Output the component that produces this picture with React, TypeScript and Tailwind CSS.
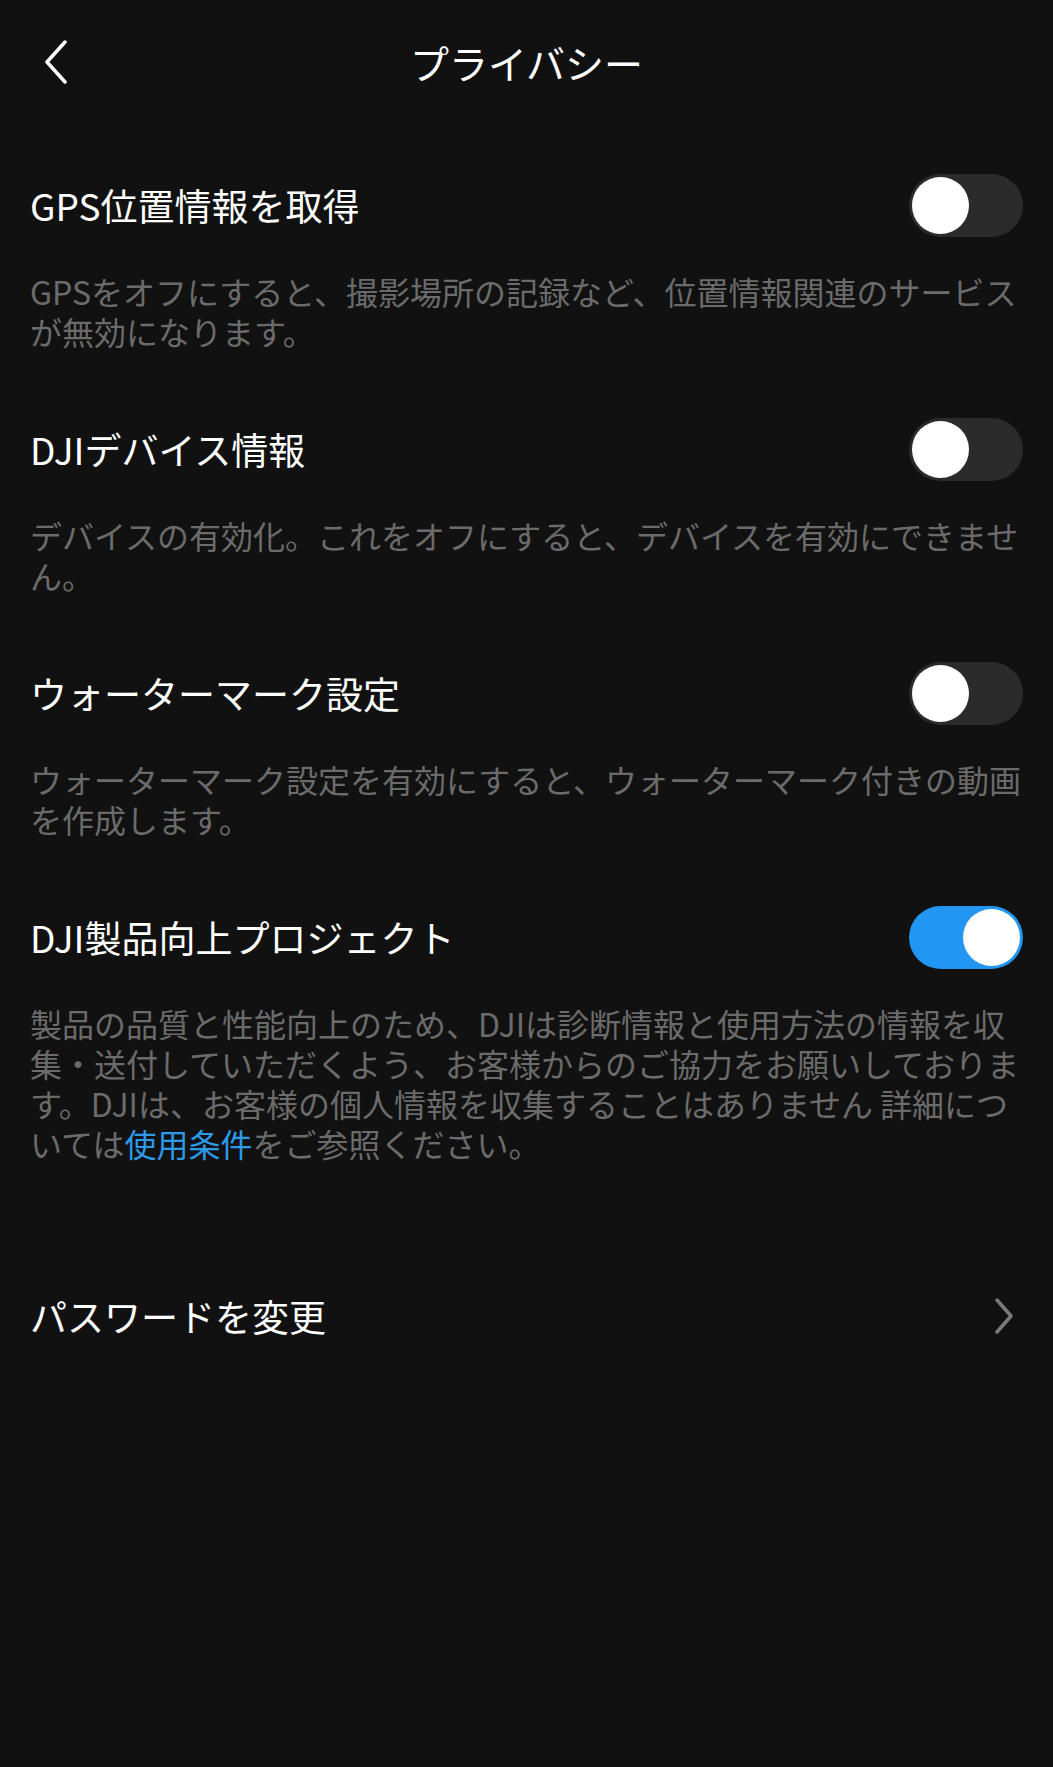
import React, { useState } from 'react';

const FONT = '"Noto Sans CJK JP", "Noto Sans", sans-serif';

type ToggleProps = {
  checked: boolean;
  onChange: (v: boolean) => void;
};

const Toggle: React.FC<ToggleProps> = ({ checked, onChange }) => (
  <button
    type="button"
    onClick={() => onChange(!checked)}
    className={`flex h-[63px] w-[114px] shrink-0 items-center rounded-full p-[3px] ${
      checked ? 'justify-end bg-[#2196f3]' : 'justify-start bg-[#2b2b2b]'
    }`}
  >
    <span className="block h-[57px] w-[57px] rounded-full bg-white" />
  </button>
);

type SettingProps = {
  title: string;
  checked: boolean;
  onChange: (v: boolean) => void;
  children: React.ReactNode;
};

const Setting: React.FC<SettingProps> = ({ title, checked, onChange, children }) => (
  <section>
    <div className="flex h-[80px] items-center justify-between">
      <span className="text-[37px] leading-none text-white">{title}</span>
      <Toggle checked={checked} onChange={onChange} />
    </div>
    <p className="mt-[26px] whitespace-nowrap text-[32px] leading-[40px] text-[#6b6b6b]">{children}</p>
  </section>
);

export default function App() {
  const [gps, setGps] = useState(false);
  const [device, setDevice] = useState(false);
  const [watermark, setWatermark] = useState(false);
  const [improve, setImprove] = useState(true);

  return (
    <div className="min-h-screen bg-[#111111]" style={{ fontFamily: FONT }}>
      {/* Header */}
      <header className="grid h-[124px] grid-cols-[1fr_auto_1fr] items-center">
        <div className="pl-[44px]">
          <svg width="24" height="44" viewBox="0 0 24 44" fill="none">
            <path d="M21 2 L3 22 L21 42" stroke="white" strokeWidth="3.5" strokeLinecap="round" strokeLinejoin="round" />
          </svg>
        </div>
        <h1 className="text-[39px] font-normal leading-none text-white">プライバシー</h1>
        <div />
      </header>

      <main className="px-[30px] pt-[41px]">
        <div className="flex flex-col gap-[58px]">
          <Setting title="GPS位置情報を取得" checked={gps} onChange={setGps}>
            GPSをオフにすると、撮影場所の記録など、位置情報関連のサービス
            <br />
            が無効になります。
          </Setting>

          <Setting title="DJIデバイス情報" checked={device} onChange={setDevice}>
            デバイスの有効化。これをオフにすると、デバイスを有効にできませ
            <br />
            ん。
          </Setting>

          <Setting title="ウォーターマーク設定" checked={watermark} onChange={setWatermark}>
            ウォーターマーク設定を有効にすると、ウォーターマーク付きの動画
            <br />
            を作成します。
          </Setting>

          <Setting title="DJI製品向上プロジェクト" checked={improve} onChange={setImprove}>
            製品の品質と性能向上のため、DJIは診断情報と使用方法の情報を収
            <br />
            集・送付していただくよう、お客様からのご協力をお願いしておりま
            <br />
            す。DJIは、お客様の個人情報を収集することはありません 詳細につ
            <br />
            いては<span className="text-[#2d9ae8]">使用条件</span>をご参照ください。
          </Setting>
        </div>

        {/* Password */}
        <div className="mt-[113px] flex h-[80px] items-center justify-between">
          <span className="text-[37px] leading-none text-white">パスワードを変更</span>
          <svg width="20" height="36" viewBox="0 0 20 36" fill="none" className="mr-[9px]">
            <path d="M3 2 L17 18 L3 34" stroke="#7a7a7a" strokeWidth="3.5" strokeLinecap="round" strokeLinejoin="round" />
          </svg>
        </div>
      </main>
    </div>
  );
}
